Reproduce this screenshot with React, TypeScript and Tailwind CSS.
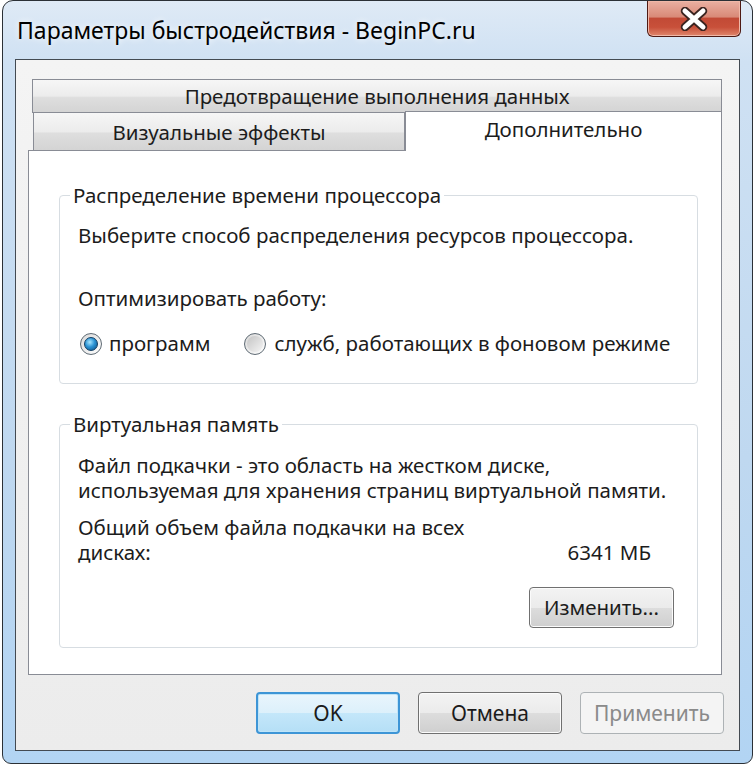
import React from "react";

function Radio({ checked = false }: { checked?: boolean }) {
  return (
    <span className="flex h-[22px] w-[22px] shrink-0 items-center justify-center rounded-full border border-[#5f6b74] bg-[linear-gradient(135deg,#d8d8d8,#ffffff)]">
      {checked ? (
        <span className="h-[14px] w-[14px] rounded-full border border-[#0f3d63] bg-[radial-gradient(circle_at_40%_35%,#a8e6ff_0%,#2b93d4_45%,#0b4c82_100%)]" />
      ) : (
        <span className="h-[16px] w-[16px] rounded-full bg-[linear-gradient(135deg,#c4c4c4,#f4f4f4)]" />
      )}
    </span>
  );
}

type BtnKind = "default" | "normal" | "disabled";

function WinButton({ kind = "normal", children }: { kind?: BtnKind; children: React.ReactNode }) {
  const styles: Record<BtnKind, string> = {
    default:
      "border-2 border-[#3d95d6] bg-[linear-gradient(#e9f5fc_0%,#dcf0fb_50%,#c4e7fa_50%,#b5dff6_100%)] text-[#1b1b1b] shadow-[inset_0_0_0_1px_#bfe4f8]",
    normal:
      "border border-[#707070] bg-[linear-gradient(#f3f3f3_0%,#ebebeb_50%,#dddddd_50%,#cfcfcf_100%)] text-[#1b1b1b] shadow-[inset_0_0_0_1px_#fbfbfb]",
    disabled: "border border-[#adb2b5] bg-[#f4f4f4] text-[#8a8a8a]",
  };
  return (
    <div
      className={`flex h-[42px] w-[144px] items-center justify-center rounded-[4px] text-[21px] leading-[25px] ${styles[kind]}`}
    >
      {children}
    </div>
  );
}

function GroupBox({
  title,
  className,
  children,
}: {
  title: string;
  className: string;
  children: React.ReactNode;
}) {
  return (
    <div className={`relative rounded-[4px] border border-[#d7dde2] pl-[18px] ${className}`}>
      <span className="absolute -top-[13px] left-[10px] whitespace-nowrap bg-white px-[3px] leading-[25px]">
        {title}
      </span>
      {children}
    </div>
  );
}

export default function App() {
  return (
    <div className="h-[766px] w-[754px] bg-white pb-[2px] pl-[2px] pr-[1px] font-['Noto_Sans',sans-serif] text-[20.5px] text-[#1c1c1c]">
      {/* окно */}
      <div className="flex h-[764px] flex-col rounded-t-[11px] rounded-b-[9px] border border-[#2b3036] bg-[linear-gradient(#dfeaf6_0%,#cfe1f3_8%,#bfd8f0_60%,#b2d4f3_100%)] px-[12px] pb-[12px]">
        {/* заголовок */}
        <div className="-mx-[12px] flex h-[58px] shrink-0 items-start justify-between">
          <span className="pl-[14px] pt-[17px] text-[23px] leading-[25px] text-black [text-shadow:0_0_6px_#ffffff]">
            Параметры быстродействия - BeginPC.ru
          </span>
          <div className="mr-[11px] flex h-[36px] w-[94px] items-center justify-center rounded-b-[6px] border border-t-0 border-[#4e1a14] bg-[linear-gradient(#eab0a2_0%,#d98a78_45%,#c24a36_50%,#c8503a_75%,#e0876c_100%)] shadow-[inset_0_0_0_1px_#f0b8a8]">
            <svg width="30" height="24" viewBox="0 0 30 24">
              <path d="M6 4 L24 20 M24 4 L6 20" stroke="#3a2420" strokeWidth="8.5" strokeLinecap="round" />
              <path d="M6 4 L24 20 M24 4 L6 20" stroke="#ffffff" strokeWidth="5" strokeLinecap="round" />
            </svg>
          </div>
        </div>

        {/* клиентская область */}
        <div className="flex h-[692px] shrink-0 flex-col border border-[#434a52] bg-[linear-gradient(#f4f4f4,#ececec)] pb-[16px] pl-[12px] pr-[17px] pt-[19px]">
          {/* вкладки */}
          <div className="ml-[4px] flex h-[34px] items-center justify-center border border-[#898c95] bg-[linear-gradient(#f6f6f6_0%,#ececec_50%,#dedede_55%,#d4d4d4_100%)]">
            <span className="leading-[25px]">Предотвращение выполнения данных</span>
          </div>
          <div className="flex h-[37px]">
            <div className="ml-[5px] flex h-[37px] w-[372px] items-center justify-center border border-t-0 border-b-0 border-[#898c95] bg-[linear-gradient(#f6f6f6_0%,#ececec_50%,#dedede_55%,#d4d4d4_100%)] pt-[2px]">
              <span className="leading-[25px]">Визуальные эффекты</span>
            </div>
            <div className="relative z-10 -mb-[1px] -mt-[2px] flex h-[40px] flex-1 items-start justify-center border border-b-0 border-[#898c95] bg-white pt-[5px]">
              <span className="leading-[25px]">Дополнительно</span>
            </div>
          </div>

          {/* панель */}
          <div className="h-[525px] shrink-0 border border-[#898c95] bg-white pl-[30px] pr-[23px] pt-[44px]">
            <GroupBox title="Распределение времени процессора" className="pb-[27px] pt-[27px]">
              <p className="whitespace-nowrap leading-[25px]">Выберите способ распределения ресурсов процессора.</p>
              <p className="mt-[38px] leading-[25px]">Оптимизировать работу:</p>
              <div className="mt-[20px] flex items-center whitespace-nowrap leading-[25px]">
                <span className="ml-[2px]">
                  <Radio checked />
                </span>
                <span className="ml-[7px]">программ</span>
                <span className="ml-[34px]">
                  <Radio />
                </span>
                <span className="ml-[8px]">служб, работающих в фоновом режиме</span>
              </div>
            </GroupBox>

            <GroupBox title="Виртуальная память" className="mt-[40px] pb-[19px] pr-[23px] pt-[28px]">
              <p className="whitespace-nowrap leading-[25px]">Файл подкачки - это область на жестком диске,</p>
              <p className="whitespace-nowrap leading-[25px]">
                используемая для хранения страниц виртуальной памяти.
              </p>
              <p className="mt-[12px] whitespace-nowrap leading-[25px]">Общий объем файла подкачки на всех</p>
              <div className="flex justify-between pr-[23px] leading-[25px]">
                <span>дисках:</span>
                <span>6341 МБ</span>
              </div>
              <div className="mt-[22px] flex justify-end">
                <div className="flex h-[41px] w-[145px] items-center justify-center rounded-[4px] border border-[#707070] bg-[linear-gradient(#f3f3f3_0%,#ebebeb_50%,#dddddd_50%,#cfcfcf_100%)] leading-[25px] shadow-[inset_0_0_0_1px_#fbfbfb]">
                  Изменить...
                </div>
              </div>
            </GroupBox>
          </div>

          {/* кнопки */}
          <div className="-mr-[2px] mt-[17px] flex justify-end gap-[18px]">
            <WinButton kind="default">OK</WinButton>
            <WinButton>Отмена</WinButton>
            <WinButton kind="disabled">Применить</WinButton>
          </div>
        </div>
      </div>
    </div>
  );
}
